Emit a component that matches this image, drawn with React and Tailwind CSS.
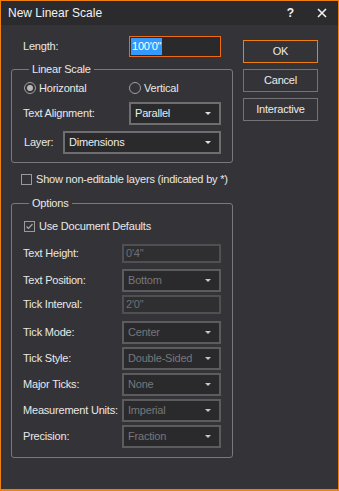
import React from 'react';

const Arrow = ({ dim }) => (
  <span
    className={`ml-auto mr-[8px] h-0 w-0 border-x-[3px] border-t-[3px] border-x-transparent ${
      dim ? 'border-t-[#c8c8c8]' : 'border-t-[#e0e0e0]'
    }`}
  />
);

const Select = ({ value, width, disabled }) => (
  <div
    className={`flex h-[23px] shrink-0 items-center border-2 bg-[#2a2a2d] pl-[4px] ${width} ${
      disabled ? 'border-[#5c5c5f] text-[#777779]' : 'border-[#6e6e70] text-[#ececec]'
    }`}
  >
    <span>{value}</span>
    <Arrow dim={disabled} />
  </div>
);

const TextBox = ({ value }) => (
  <div className="flex h-[19px] w-[99px] shrink-0 items-center border-2 border-[#505053] bg-[#2f2f32] pl-[2px] text-[#6f6f72]">
    {value}
  </div>
);

const Radio = ({ checked, label }) => (
  <label className="flex items-center gap-[3px]">
    <span className="flex h-[12px] w-[12px] items-center justify-center rounded-full border border-[#a0a0a0]">
      {checked && <span className="h-[6px] w-[6px] rounded-full bg-[#b8b8b8]" />}
    </span>
    {label}
  </label>
);

const Check = ({ checked, label }) => (
  <label className="flex h-[14px] items-center gap-[4px] whitespace-nowrap">
    <span className="flex h-[11px] w-[11px] shrink-0 items-center justify-center border border-[#9a9a9a]">
      {checked && (
        <svg width="9" height="9" viewBox="0 0 9 9">
          <path d="M1.5 4.5 L3.5 6.5 L7.5 2" fill="none" stroke="#a8a8a8" strokeWidth="1.2" />
        </svg>
      )}
    </span>
    {label}
  </label>
);

const OptionRow = ({ label, children, className = '' }) => (
  <div className={`flex items-center ${className}`}>
    <span className="w-[99px] shrink-0 whitespace-nowrap pl-[11px] box-content">{label}</span>
    {children}
  </div>
);

const Button = ({ children, primary, className = '' }) => (
  <button
    className={`h-[23px] w-[75px] border text-[#ececec] ${
      primary ? 'border-[#f07f12]' : 'border-[#737376]'
    } ${className}`}
  >
    {children}
  </button>
);

export default function App() {
  return (
    <div
      className="flex h-[491px] w-[339px] flex-col border border-b-2 border-[#f07f12] bg-[#343438] text-[11px] tracking-[-0.2px] text-[#e8e8e8]"
      style={{ fontFamily: '"Liberation Sans", Arial, sans-serif' }}
    >
      {/* title bar */}
      <div className="flex h-[24px] items-center bg-[#2b2b2d] pl-[7px] text-[12px] tracking-normal text-[#f2f2f2]">
        <span>New Linear Scale</span>
        <span className="ml-auto mr-[23px] font-bold">?</span>
        <svg className="mr-[11px]" width="10" height="10" viewBox="0 0 10 10">
          <path d="M1 1 L9 9 M9 1 L1 9" stroke="#f2f2f2" strokeWidth="1.6" />
        </svg>
      </div>

      <div className="flex pl-[10px]">
        {/* left column */}
        <div className="w-[222px]">
          <div className="mt-[11px] flex h-[21px] items-center">
            <span className="w-[118px] pl-[12px]">Length:</span>
            <div className="flex h-[21px] w-[92px] items-center border border-[#f06a12] bg-[#2a2a2d] pl-[1px]">
              <span className="bg-[#3399ff] px-[1px] text-white">100'0"</span>
            </div>
          </div>

          <fieldset className="mt-[5px] rounded-[3px] border border-[#79797c] pb-[8px] pl-[12px]">
            <legend className="ml-[5px] px-[3px] leading-[14px]">Linear Scale</legend>
            <div className="mt-[5px] flex h-[14px] items-center">
              <div className="w-[105px]">
                <Radio checked label="Horizontal" />
              </div>
              <Radio label="Vertical" />
            </div>
            <div className="mt-[7px] flex items-center">
              <span className="-ml-[1px] w-[106px]">Text Alignment:</span>
              <Select value="Parallel" width="w-[92px]" />
            </div>
            <div className="mt-[6px] flex items-center">
              <span className="w-[39px]">Layer:</span>
              <Select value="Dimensions" width="w-[158px]" />
            </div>
          </fieldset>

          <div className="mt-[9px] pl-[10px]">
            <Check label="Show non-editable layers (indicated by *)" />
          </div>

          <fieldset className="mt-[10px] rounded-[3px] border border-[#79797c] pb-[9px] pl-[12px]">
            <legend className="ml-[5px] px-[3px] leading-[14px]">Options</legend>
            <div className="mt-[9px]">
              <Check checked label="Use Document Defaults" />
            </div>
            <div className="-ml-[12px]">
              <OptionRow label="Text Height:" className="mt-[11px]">
                <TextBox value={"0'4\""} />
              </OptionRow>
              <OptionRow label="Text Position:" className="mt-[6px]">
                <Select value="Bottom" width="w-[99px]" disabled />
              </OptionRow>
              <OptionRow label="Tick Interval:" className="mt-[3px]">
                <TextBox value={"2'0\""} />
              </OptionRow>
              <OptionRow label="Tick Mode:" className="mt-[7px]">
                <Select value="Center" width="w-[99px]" disabled />
              </OptionRow>
              <OptionRow label="Tick Style:" className="mt-[3px]">
                <Select value="Double-Sided" width="w-[99px]" disabled />
              </OptionRow>
              <OptionRow label="Major Ticks:" className="mt-[3px]">
                <Select value="None" width="w-[99px]" disabled />
              </OptionRow>
              <OptionRow label="Measurement Units:" className="mt-[3px]">
                <Select value="Imperial" width="w-[99px]" disabled />
              </OptionRow>
              <OptionRow label="Precision:" className="mt-[3px]">
                <Select value="Fraction" width="w-[99px]" disabled />
              </OptionRow>
            </div>
          </fieldset>
        </div>

        {/* right column */}
        <div className="ml-[10px] flex flex-col pt-[15px]">
          <Button primary>OK</Button>
          <Button className="mt-[6px]">Cancel</Button>
          <Button className="mt-[6px]">Interactive</Button>
        </div>
      </div>
    </div>
  );
}
